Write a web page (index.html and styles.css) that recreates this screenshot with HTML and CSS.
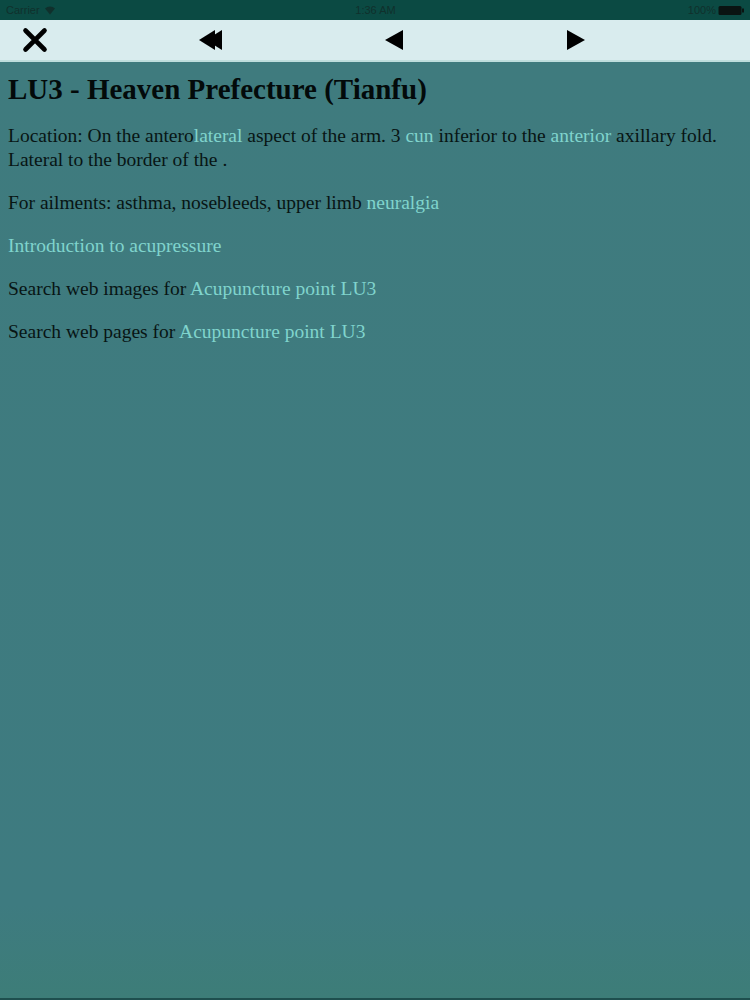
FILE: index.html
```html
<!DOCTYPE html>
<html>
<head>
<meta charset="utf-8">
<link rel="stylesheet" href="styles.css">
</head>
<body>
<div class="screen">
  <div class="status">
    <div class="status-left">
      <span>Carrier</span>
      <svg class="wifi" width="12" height="10" viewBox="0 0 12 10"><path d="M6 9.5 L1 3.5 A7.5 7.5 0 0 1 11 3.5 Z" fill="#10302c"/></svg>
    </div>
    <div class="status-center">1:36 AM</div>
    <div class="status-right">
      <span>100%</span>
      <svg width="27" height="11" viewBox="0 0 27 11"><rect x="0.5" y="1" width="23" height="9" rx="1.5" fill="#0a1412"/><rect x="24" y="3.5" width="2" height="4" fill="#0a1412"/></svg>
    </div>
  </div>
  <div class="toolbar">
    <div class="tb-btn">
      <svg width="26" height="26" viewBox="0 0 26 26"><path d="M3.5 3.5 L22.5 22.5 M22.5 3.5 L3.5 22.5" stroke="#000" stroke-width="4.6" stroke-linecap="round"/></svg>
    </div>
    <div class="tb-btn">
      <svg width="24" height="22" viewBox="0 0 24 22"><polygon points="7,11 23,1 23,21" fill="#000"/><polygon points="0,11 16,1 16,21" fill="#000"/></svg>
    </div>
    <div class="tb-btn">
      <svg width="20" height="22" viewBox="0 0 20 22"><polygon points="1,11 19,1 19,21" fill="#000"/></svg>
    </div>
    <div class="tb-btn">
      <svg width="20" height="22" viewBox="0 0 20 22"><polygon points="19,11 1,1 1,21" fill="#000"/></svg>
    </div>
  </div>
  <div class="content">
    <h1>LU3 - Heaven Prefecture (Tianfu)</h1>
    <p>Location: On the antero<a>lateral</a> aspect of the arm. 3 <a>cun</a> inferior to the <a>anterior</a> axillary fold. Lateral to the border of the .</p>
    <p>For ailments: asthma, nosebleeds, upper limb <a>neuralgia</a></p>
    <p><a>Introduction to acupressure</a></p>
    <p>Search web images for <a>Acupuncture point LU3</a></p>
    <p>Search web pages for <a>Acupuncture point LU3</a></p>
  </div>
</div>
</body>
</html>
```
FILE: styles.css
```css
html, body {
  margin: 0;
  padding: 0;
}
body {
  width: 750px;
  height: 1000px;
  overflow: hidden;
  background: #3e7b7e;
}
.screen {
  display: flex;
  flex-direction: column;
  height: 1000px;
}
.status {
  height: 20px;
  flex: none;
  background: #0b4a43;
  color: #10302c;
  font-family: "Liberation Sans", Arial, sans-serif;
  font-size: 11px;
  display: grid;
  grid-template-columns: 1fr auto 1fr;
  align-items: center;
  padding: 0 5px 0 6px;
}
.status-left {
  display: flex;
  align-items: center;
  gap: 4px;
}
.status-center {
  text-align: center;
}
.status-right {
  display: flex;
  justify-content: flex-end;
  align-items: center;
  gap: 2px;
}
.toolbar {
  height: 42px;
  flex: none;
  background: #d9ecee;
  display: grid;
  grid-template-columns: 176px 183px 182px 40px;
  padding-left: 15px;
  align-items: center;
  box-sizing: border-box;
  border-bottom: 2px solid #bfdedd;
}
.tb-btn {
  width: 40px;
  height: 40px;
  display: flex;
  align-items: center;
  justify-content: center;
}
.content {
  flex: 1;
  background: linear-gradient(180deg, #3f7b7e 0%, #3e7b80 90%, #3d7d78 100%);
  padding: 0 8px;
  font-family: "Liberation Serif", "Times New Roman", serif;
  color: #081514;
  border-bottom: 2px solid #1e4f4e;
}
h1 {
  font-size: 29px;
  font-weight: bold;
  margin: 10px 0 18px;
  line-height: 34px;
  color: #030a0a;
}
p {
  font-size: 19.5px;
  line-height: 24px;
  margin: 0 0 19px;
}
a {
  color: #80d4cd;
}
```
